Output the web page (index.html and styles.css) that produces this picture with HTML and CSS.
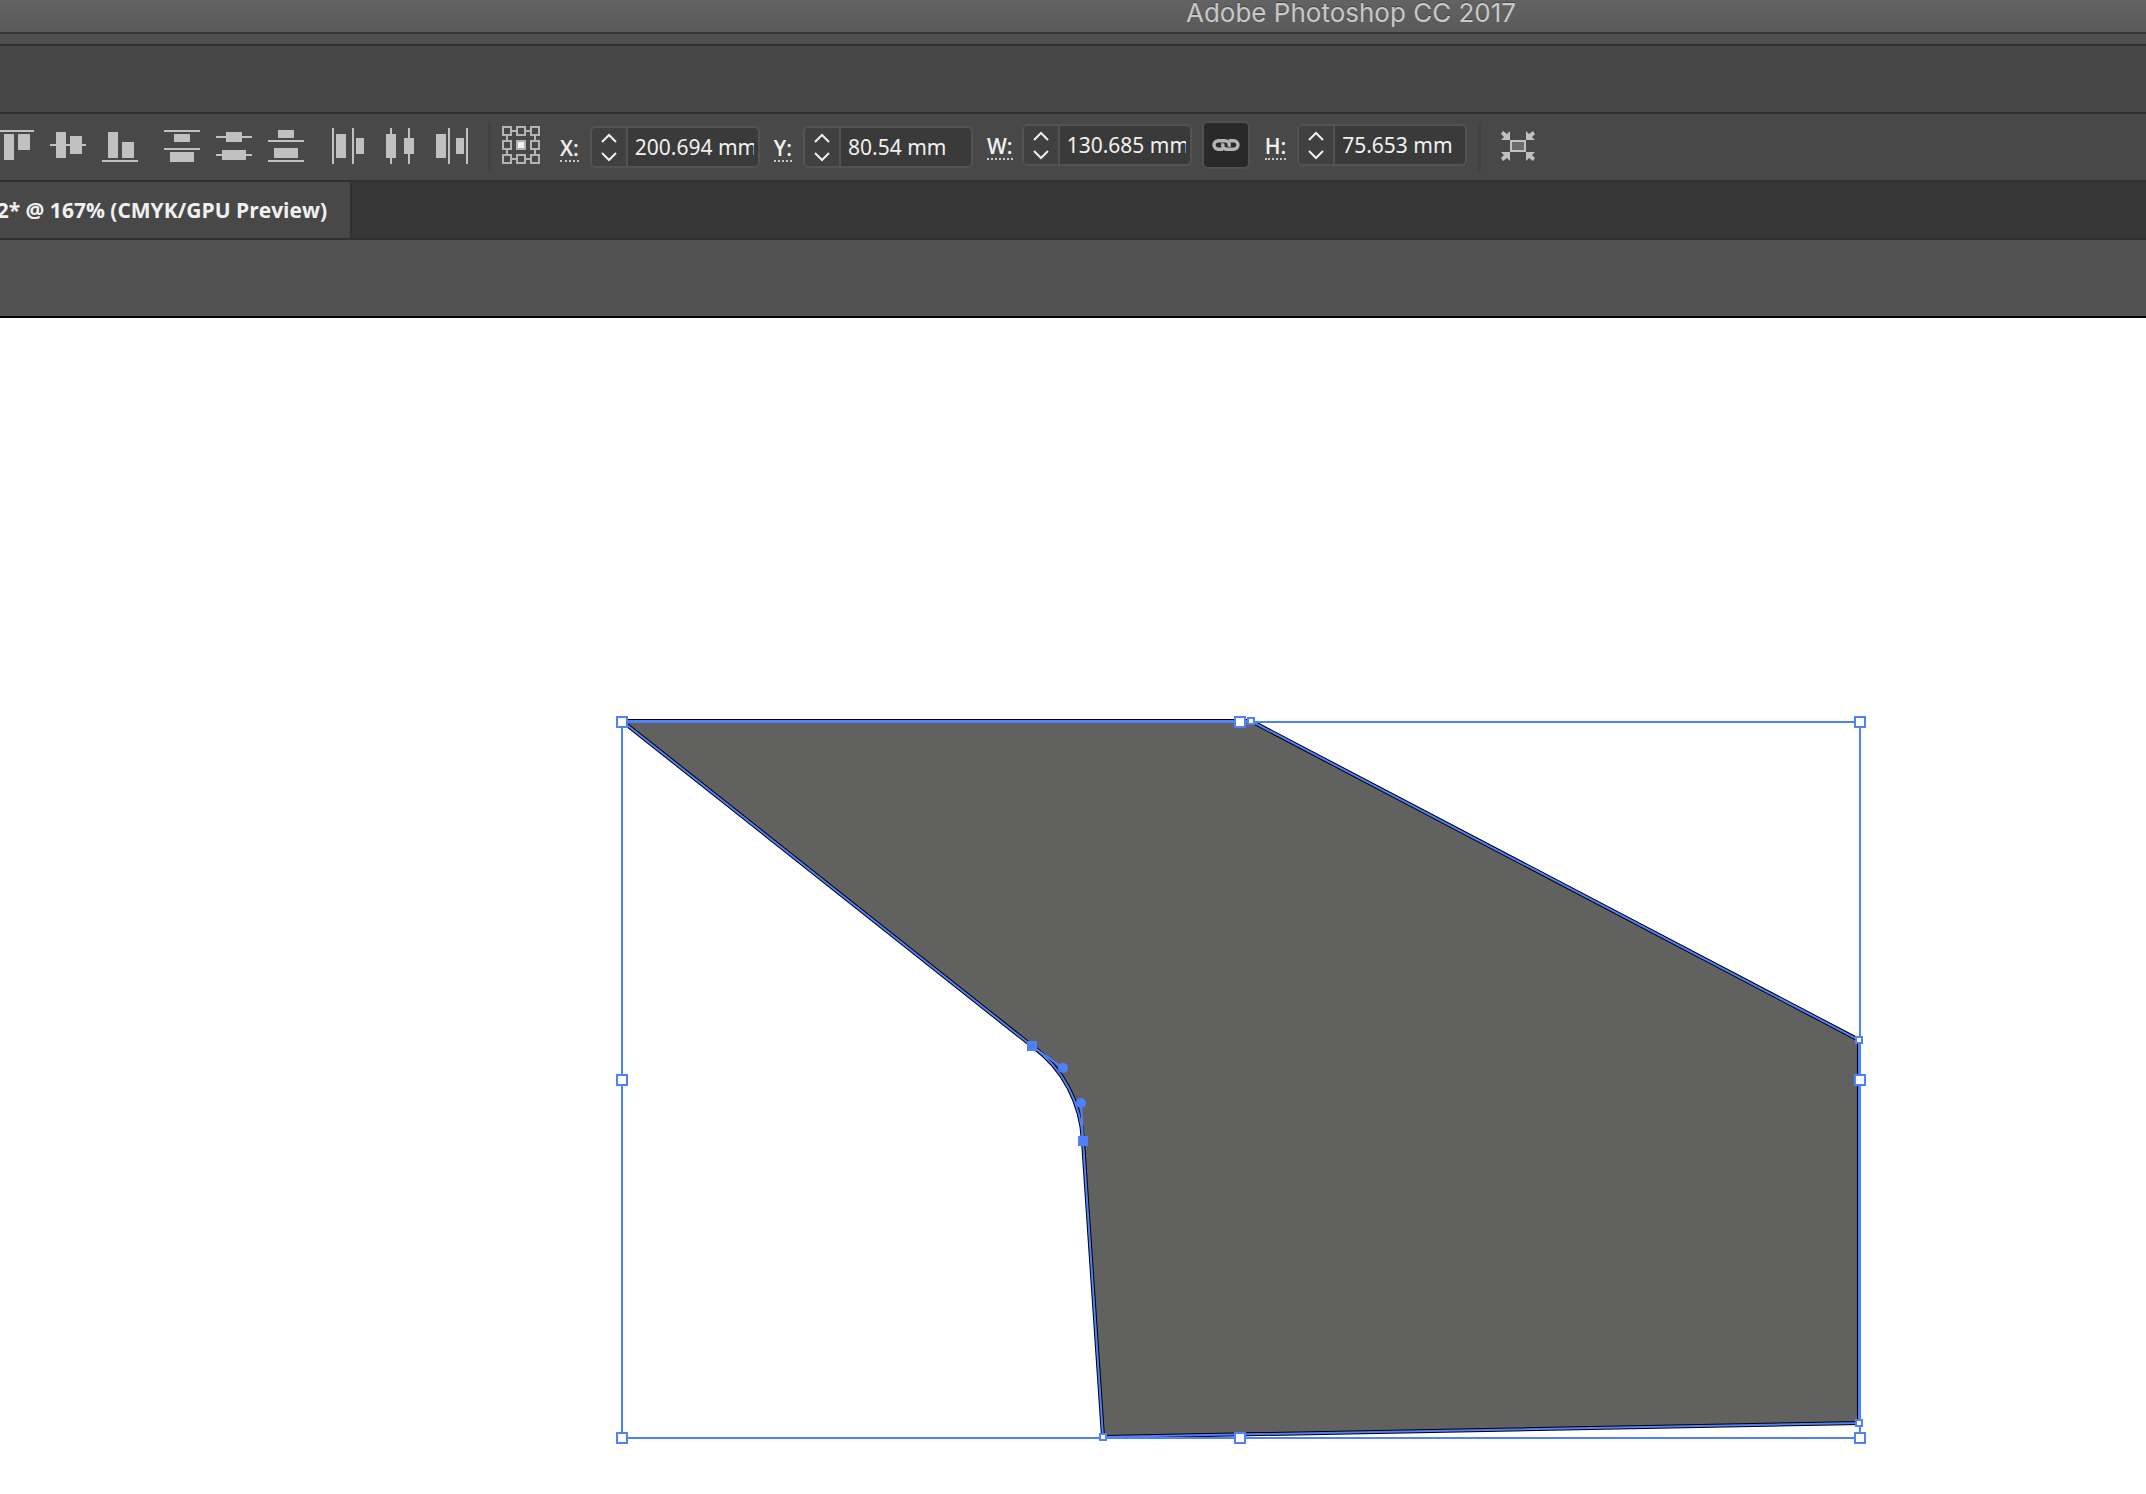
FILE: index.html
```html
<!DOCTYPE html>
<html lang="en">
<head>
<meta charset="utf-8">
<title>Adobe Photoshop CC 2017</title>
<link rel="stylesheet" href="styles.css">
</head>
<body>
<header class="titlebar"><h1 class="title">Adobe Photoshop CC 2017</h1></header>
<div class="frame"></div>
<div class="appbar"></div>

<div class="toolbar" role="toolbar" aria-label="Control">
  <div class="group">
    <button class="tool" aria-label="Vertical align top"><svg viewBox="0 0 36 36"><path d="M0 2h36v2H0zM6 6h10v26H6zM20 6h12v16H20z"/></svg></button>
    <button class="tool" aria-label="Vertical align center"><svg viewBox="0 0 36 36"><path d="M0 16h36v2H0zM6 4h10v26H6zM20 8h12v18H20z"/></svg></button>
    <button class="tool" aria-label="Vertical align bottom"><svg viewBox="0 0 36 36"><path d="M0 32h36v2H0zM6 4h10v26H6zM20 14h12v16H20z"/></svg></button>
  </div>
  <div class="group">
    <button class="tool" aria-label="Vertical distribute top"><svg viewBox="0 0 36 36"><path d="M0 2h36v2H0zM0 20h36v2H0zM10 6h16v8H10zM6 24h24v10H6z"/></svg></button>
    <button class="tool" aria-label="Vertical distribute center"><svg viewBox="0 0 36 36"><path d="M0 8h36v2H0zM0 26h36v2H0zM10 4h16v10H10zM6 22h24v10H6z"/></svg></button>
    <button class="tool" aria-label="Vertical distribute bottom"><svg viewBox="0 0 36 36"><path d="M0 12h36v2H0zM0 32h36v2H0zM10 2h16v8H10zM6 20h24v10H6z"/></svg></button>
  </div>
  <div class="group">
    <button class="tool" aria-label="Horizontal distribute left"><svg viewBox="0 0 36 36"><path d="M0 0h2v36H0zM20 0h2v36h-2zM4 6h10v24H4zM24 10h8v16h-8z"/></svg></button>
    <button class="tool" aria-label="Horizontal distribute center"><svg viewBox="0 0 36 36"><path d="M6 0h2v36H6zM24 0h2v36h-2zM2 6h10v24H2zM20 10h10v16H20z"/></svg></button>
    <button class="tool" aria-label="Horizontal distribute right"><svg viewBox="0 0 36 36"><path d="M12 0h2v36h-2zM30 0h2v36h-2zM0 6h10v24H0zM20 10h8v16h-8z"/></svg></button>
  </div>
  <span class="separator"></span>
  <button class="tool reference" aria-label="Reference point">
    <svg viewBox="0 0 38 38"><g fill="none" stroke="#b4b4b4" stroke-width="2"><path d="M1 1h8v8H1zM15 1h8v8h-8zM29 1h8v8h-8zM1 15h8v8H1zM29 15h8v8h-8zM1 29h8v8H1zM15 29h8v8h-8zM29 29h8v8h-8zM10 5h4M24 5h4M10 33h4M24 33h4M5 10v4M5 24v4M33 10v4M33 24v4"/></g><path fill="#b4b4b4" d="M14 14h10v10H14z"/><path fill="#f2f2f2" d="M16 16h6v6h-6z"/></svg>
  </button>

  <div class="fields position">
    <label for="x">X:</label>
    <div class="stepper">
      <div class="arrows"><button aria-label="Increase X"><svg viewBox="0 0 16 8"><path d="M1 8l7-7 7 7"/></svg></button><button aria-label="Decrease X"><svg viewBox="0 0 16 8"><path d="M1 0l7 7 7-7"/></svg></button></div>
      <input id="x" type="text" value="200.694 mm">
    </div>
    <label for="y">Y:</label>
    <div class="stepper">
      <div class="arrows"><button aria-label="Increase Y"><svg viewBox="0 0 16 8"><path d="M1 8l7-7 7 7"/></svg></button><button aria-label="Decrease Y"><svg viewBox="0 0 16 8"><path d="M1 0l7 7 7-7"/></svg></button></div>
      <input id="y" type="text" value="80.54 mm">
    </div>
  </div>
  <div class="fields size">
    <label for="w" class="wide">W:</label>
    <div class="stepper">
      <div class="arrows"><button aria-label="Increase width"><svg viewBox="0 0 16 8"><path d="M1 8l7-7 7 7"/></svg></button><button aria-label="Decrease width"><svg viewBox="0 0 16 8"><path d="M1 0l7 7 7-7"/></svg></button></div>
      <input id="w" type="text" value="130.685 mm">
    </div>
    <button class="link" aria-label="Constrain proportions">
      <svg viewBox="0 0 28 14"><g fill="none" stroke="#b4b4b4" stroke-width="3.4"><path d="M11 11.300H6.300A4.300 4.300 0 0 1 6.300 2.700H13C16.500 2.700 18 5.500 17 8.800"/><path d="M17 2.700H21.700A4.300 4.300 0 0 1 21.700 11.300H15C11.500 11.300 10 8.500 11 5.200"/></g></svg>
    </button>
    <label for="h">H:</label>
    <div class="stepper">
      <div class="arrows"><button aria-label="Increase height"><svg viewBox="0 0 16 8"><path d="M1 8l7-7 7 7"/></svg></button><button aria-label="Decrease height"><svg viewBox="0 0 16 8"><path d="M1 0l7 7 7-7"/></svg></button></div>
      <input id="h" type="text" value="75.653 mm">
    </div>
  </div>
  <span class="separator"></span>
  <button class="tool isolate" aria-label="Isolate selected object">
    <svg viewBox="0 0 34 30"><rect x="10" y="10" width="14" height="10" fill="#6b6b6b" stroke="#c2c2c2" stroke-width="2"/><path d="M9 0v9H0l3-3-3-3 2-3 4 3zM25 0v9h9l-3-3 3-3-2-3-4 3zM9 30v-9H0l3 3-3 3 2 3 4-3zM25 30v-9h9l-3 3 3 3-2 3-4-3z"/></svg>
  </button>
</div>

<nav class="tabs" aria-label="Documents">
  <a class="tab" href="#document">2* @ 167% (CMYK/GPU Preview)</a>
</nav>
<div class="pasteboard"></div>

<main class="canvas" id="document">
  <svg class="artwork" role="img" aria-label="Selected shape">
    <path class="shape" d="M622 403H1251L1859 722V1105L1103 1119L1083 823C1081 785 1063 750 1032 728Z"/>
    <path class="outline" d="M622 403H1251L1859 722V1105L1103 1119L1083 823C1081 785 1063 750 1032 728Z"/>
    <path class="outline" d="M1032 728L1063 750M1083 823L1081 785"/>
    <rect class="outline" x="622" y="404" width="1238" height="716"/>
    <g class="anchors">
      <rect x="1248" y="400" width="6" height="6"/>
      <rect x="1856" y="719" width="6" height="6"/>
      <rect x="1856" y="1102" width="6" height="6"/>
      <rect x="1100" y="1116" width="6" height="6"/>
    </g>
    <g class="handles">
      <rect x="617" y="399" width="10" height="10"/>
      <rect x="1235" y="399" width="10" height="10"/>
      <rect x="1855" y="399" width="10" height="10"/>
      <rect x="617" y="757" width="10" height="10"/>
      <rect x="1855" y="757" width="10" height="10"/>
      <rect x="617" y="1115" width="10" height="10"/>
      <rect x="1235" y="1115" width="10" height="10"/>
      <rect x="1855" y="1115" width="10" height="10"/>
    </g>
    <g class="selected">
      <rect x="1027" y="723" width="10" height="10"/>
      <rect x="1078" y="818" width="10" height="10"/>
      <circle cx="1063" cy="750" r="5"/>
      <circle cx="1081" cy="785" r="5"/>
    </g>
  </svg>
</main>
</body>
</html>
```
FILE: styles.css
```css
* { box-sizing: border-box; }

body {
  margin: 0;
  min-height: 100vh;
  display: flex;
  flex-direction: column;
  overflow: hidden;
  background: #fff;
  color: #f0f0f0;
  font: 21px/28px "Noto Sans", sans-serif;
}

button {
  display: block;
  margin: 0;
  padding: 0;
  border: 0;
  background: none;
}

svg { display: block; }

.titlebar {
  height: 34px;
  padding-left: 1186px;
  border-bottom: 2px solid #353535;
  background: linear-gradient(#636363, #595959);
}

.title {
  margin: 0;
  margin-top: -3px;
  color: #c8c8c8;
  font: 400 26px/32px Inter, sans-serif;
  white-space: nowrap;
  text-shadow: 0 -1px #444;
}

.frame {
  height: 12px;
  border-bottom: 2px solid #303030;
  background: #4f4f4f;
}

.appbar {
  height: 68px;
  border-bottom: 2px solid #303030;
  background: #474747;
}

.toolbar {
  display: flex;
  align-items: center;
  height: 68px;
  padding-bottom: 1px;
  border-bottom: 2px solid #303030;
  background: #484848;
}

.toolbar > * { flex: none; }

.group {
  display: flex;
  gap: 16px;
  margin-right: 26px;
  margin-bottom: 1px;
}

.group:first-child { margin-left: -2px; }
.group:nth-child(2) { margin-right: 28px; }
.group:nth-child(3) { margin-right: 16px; }

.tool svg {
  width: 36px;
  height: 36px;
  fill: #c0c0c0;
}

.separator {
  width: 3px;
  height: 50px;
  background: #424242;
}

.reference {
  margin: 0 20px 3px 11px;
}

.reference svg { width: 38px; height: 38px; }

.fields {
  display: flex;
  align-items: center;
}

.position { padding-top: 1px; }
.size { padding-bottom: 3px; }

.fields label {
  height: 25px;
  margin: 5px 11px 0 0;
  border-bottom: 2px dotted #c8c8c8;
  font: 600 21px/23px "Open Sans", sans-serif;
}

.fields .wide { margin-right: 9px; }

.stepper {
  display: flex;
  width: 170px;
  height: 42px;
  margin-right: 14px;
  overflow: hidden;
  border: 2px solid #535353;
  border-radius: 6px;
  background: #3a3a3a;
}

.arrows {
  display: flex;
  flex: none;
  flex-direction: column;
  width: 36px;
  border-right: 2px solid #535353;
  background: #404040;
}

.arrows button {
  display: flex;
  flex: 1;
  align-items: center;
  justify-content: center;
}

.arrows svg {
  width: 16px;
  height: 8px;
  overflow: visible;
  fill: none;
  stroke: #f0f0f0;
  stroke-width: 2;
}

.stepper input {
  flex: 1;
  min-width: 0;
  margin: 0 4px 0 7px;
  padding: 0;
  border: 0;
  outline: 0;
  background: none;
  color: #f0f0f0;
  font: 21px/38px "Noto Sans", sans-serif;
}

.link {
  width: 48px;
  height: 48px;
  margin: 0 15px 0 -4px;
  border: 2px solid #505050;
  border-radius: 6px;
  background: #292929;
}

.link svg {
  width: 28px;
  height: 14px;
  margin: auto;
}

.size + .separator { margin-left: -3px; }

.isolate { margin: 0 0 2px 20px; }
.isolate svg { width: 34px; height: 30px; }

.tabs {
  display: flex;
  height: 58px;
  border-bottom: 2px solid #303030;
  background: #373737;
}

.tab {
  display: flex;
  justify-content: flex-end;
  width: 352px;
  padding-right: 23px;
  border-right: 2px solid #303030;
  background: #484848;
  color: #f0f0f0;
  font: 700 21px/56px "Open Sans", sans-serif;
  text-decoration: none;
  white-space: nowrap;
}

.pasteboard {
  height: 78px;
  border-bottom: 2px solid #000;
  background: #525252;
}

.canvas {
  display: flex;
  flex: 1;
  background: #fff;
}

.artwork {
  width: 100%;
  min-height: 1140px;
}

.shape {
  fill: #61615f;
  stroke: #000;
  stroke-width: 4;
}

.outline {
  fill: none;
  stroke: #4f80ff;
  stroke-width: 2;
}

.anchors,
.handles {
  fill: #fff;
  stroke: #4f80ff;
  stroke-width: 2;
}

.selected { fill: #4f80ff; }
```
